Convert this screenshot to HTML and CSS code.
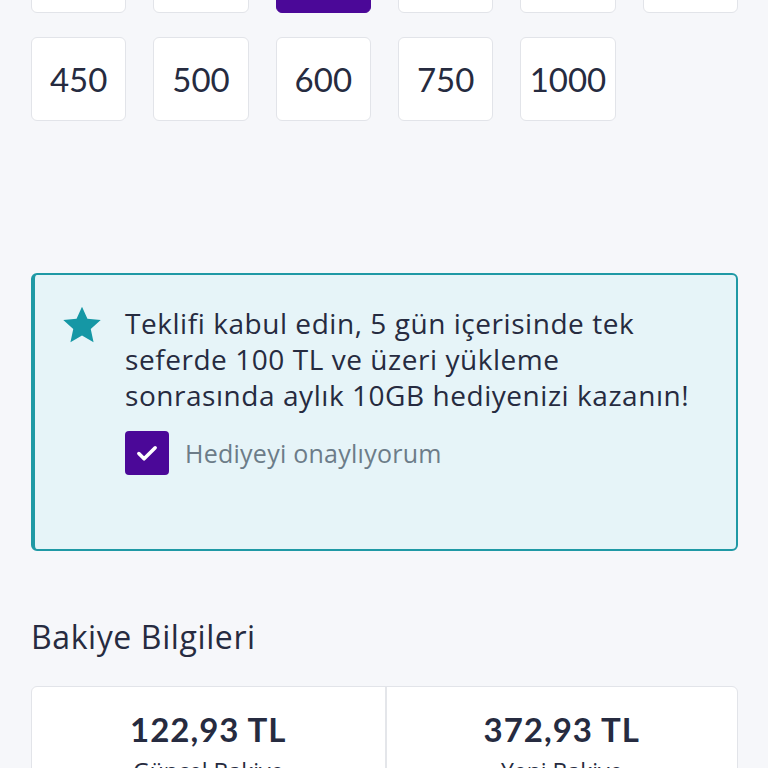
FILE: index.html
```html
<!DOCTYPE html>
<html lang="tr">
<head>
<meta charset="utf-8">
<link rel="stylesheet" href="styles.css">
</head>
<body>
<div class="page">
  <div class="amounts">
    <button class="amount">50</button>
    <button class="amount">100</button>
    <button class="amount selected">250</button>
    <button class="amount">300</button>
    <button class="amount">350</button>
    <button class="amount">400</button>
    <button class="amount">450</button>
    <button class="amount">500</button>
    <button class="amount">600</button>
    <button class="amount">750</button>
    <button class="amount">1000</button>
  </div>

  <div class="offer">
    <svg class="star" viewBox="0 0 24 24" width="42" height="42"><path d="M12 1.5l3.1 6.9 7.6.8-5.7 5.1 1.6 7.5L12 18 5.4 21.8 7 14.3 1.3 9.2l7.6-.8z" fill="#1597a5"/></svg>
    <div class="offer-body">
      <p class="offer-text">Teklifi kabul edin, 5 gün içerisinde tek seferde 100 TL ve üzeri yükleme sonrasında aylık 10GB hediyenizi kazanın!</p>
      <label class="check">
        <span class="box"><svg viewBox="0 0 24 24" width="28" height="28"><path d="M5 12.5l4.5 4.5L19 7.5" fill="none" stroke="#fff" stroke-width="3" stroke-linecap="round" stroke-linejoin="round"/></svg></span>
        <span class="check-label">Hediyeyi onaylıyorum</span>
      </label>
    </div>
  </div>

  <h2 class="section-title">Bakiye Bilgileri</h2>
  <div class="balance">
    <div class="balance-col">
      <div class="balance-value">122,93 TL</div>
      <div class="balance-label">Güncel Bakiye</div>
    </div>
    <div class="balance-col">
      <div class="balance-value">372,93 TL</div>
      <div class="balance-label">Yeni Bakiye</div>
    </div>
  </div>
</div>
</body>
</html>
```

FILE: styles.css
```css
html, body {
  margin: 0;
  padding: 0;
  background: #f6f7fa;
  font-family: "Open Sans", Lato, sans-serif;
  color: #262b40;
  overflow: hidden;
}
.page {
  padding: 0 30px 0 31px;
  margin-top: -71px;
}
.amounts {
  display: grid;
  grid-template-columns: repeat(6, 1fr);
  column-gap: 27px;
  row-gap: 24px;
}
.amount {
  height: 84px;
  background: #fff;
  border: 1px solid #e2e4e9;
  border-radius: 6px;
  font-family: Lato, sans-serif;
  font-size: 33px;
  color: #262b40;
  padding: 0;
}
.amount.selected {
  background: #4b0898;
  border-color: #4b0898;
  color: #fff;
}
.offer {
  margin-top: 152px;
  display: flex;
  gap: 22px;
  background: #e6f4f8;
  border: 2px solid #1f99a5;
  border-left-width: 4px;
  border-radius: 6px;
  padding: 29px 20px 74px 26px;
}
.star {
  flex: none;
}
.offer-body {
  max-width: 585px;
  padding-top: 1px;
}
.offer-text {
  margin: 0;
  font-size: 28px;
  letter-spacing: 0.55px;
  line-height: 36px;
  color: #262b40;
}
.check {
  display: flex;
  align-items: center;
  gap: 16px;
  margin-top: 18px;
}
.box {
  width: 44px;
  height: 44px;
  border-radius: 4px;
  background: #4b0898;
  display: flex;
  align-items: center;
  justify-content: center;
}
.check-label {
  font-size: 25px;
  letter-spacing: 0.25px;
  color: #6c7c88;
}
.section-title {
  margin: 66px 0 0;
  font-size: 32px;
  letter-spacing: 0.6px;
  font-weight: 400;
  line-height: 40px;
  color: #262b40;
}
.balance {
  margin-top: 29px;
  display: grid;
  grid-template-columns: 1fr 1fr;
  background: #fff;
  border: 1px solid #e2e4e9;
  border-radius: 6px;
}
.balance-col {
  text-align: center;
  padding: 22px 0 30px;
}
.balance-col + .balance-col {
  border-left: 2px solid #e4e6ea;
}
.balance-value {
  font-family: Lato, sans-serif;
  font-size: 33px;
  letter-spacing: 1px;
  font-weight: 700;
  line-height: 40px;
}
.balance-label {
  font-size: 23px;
  margin-top: 6px;
  color: #262b40;
}
```
